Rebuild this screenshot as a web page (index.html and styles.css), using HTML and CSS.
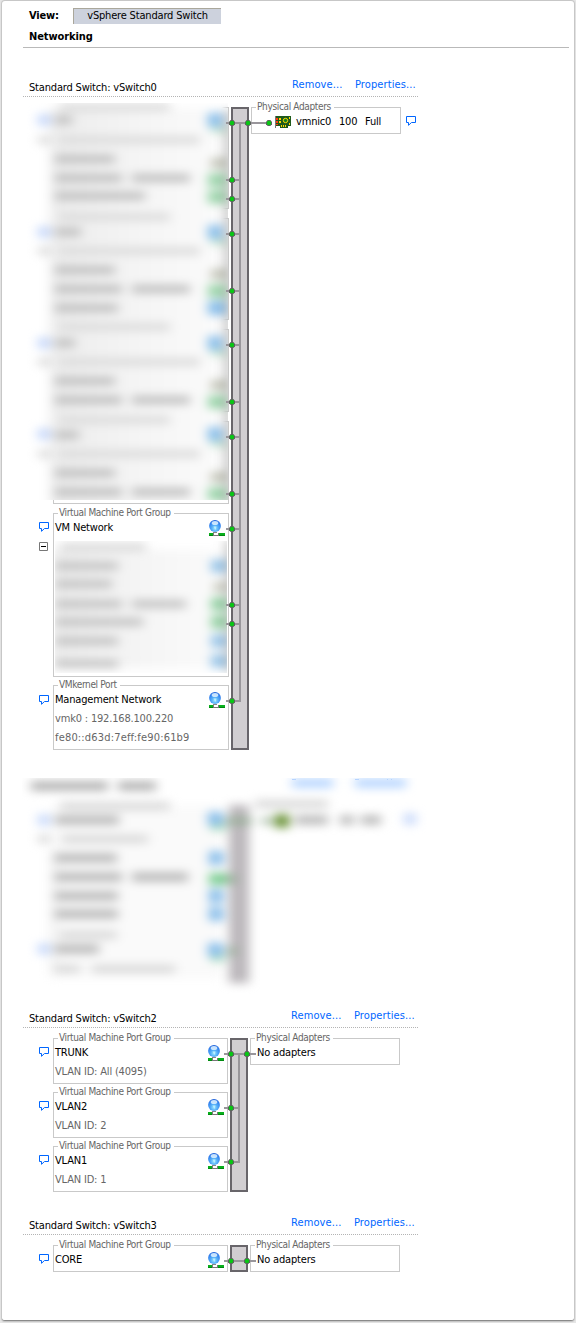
FILE: index.html
```html
<!DOCTYPE html>
<html lang="en">
<head>
<meta charset="utf-8">
<title>Networking</title>
<link rel="stylesheet" href="styles.css">
</head>
<body>
<svg class="defs" width="0" height="0">
  <defs>
    <radialGradient id="ball" cx="50%" cy="70%" r="70%">
      <stop offset="0" stop-color="#9fe8ff"/><stop offset=".4" stop-color="#55aef8"/><stop offset=".8" stop-color="#2f7fee"/><stop offset="1" stop-color="#1a5cd6"/>
    </radialGradient>
    <filter id="soft" x="-20%" y="-20%" width="140%" height="140%" color-interpolation-filters="sRGB"><feGaussianBlur stdDeviation="5.500 5"/></filter>
    <linearGradient id="haze"><stop offset="0" stop-color="#ececec"/><stop offset=".55" stop-color="#f5f5f5"/><stop offset="1" stop-color="#fbfbfb"/></linearGradient>
    <symbol id="globe" viewBox="0 0 16 16">
      <circle cx="6" cy="6" r="5.900" fill="url(#ball)"/>
      <ellipse cx="6" cy="2.900" rx="3.300" ry="2" fill="#e2f3ff" opacity=".85"/>
      <path d="M4.500 6.500H7.500L6.500 10Z" fill="#c8f4ff" opacity=".8"/>
      <path d="M4 12H8V13H4Z" fill="#888"/>
      <path d="M0 13H16V16H0Z" fill="#008a10"/><path d="M0 13H16V15H0Z" fill="#08b01c"/>
      <path d="M4 13H10V16H4Z" fill="#777"/><path d="M5 13H9V15H5Z" fill="#fff"/>
    </symbol>
    <symbol id="note" viewBox="0 0 10 10">
      <path d="M.5.5H9.500V6.500H5.500L2.500 9.300V6.500H.5Z" fill="#fff" stroke="#0066ff"/>
    </symbol>
    <symbol id="dot" viewBox="-3 -3 6 6" overflow="visible">
      <path d="M-1.300-3H1.300L3-1.300V1.300L1.300 3H-1.300L-3 1.300V-1.300Z" fill="#606060"/>
      <circle r="2.200" fill="#08c814"/>
    </symbol>
  </defs>
</svg>
<main class="page">
  <div class="toolbar"><span class="view">View:</span><span class="mode">vSphere Standard Switch</span></div>
  <h1 class="heading">Networking</h1>

  <section class="switch first">
    <header class="head"><span class="title">Standard Switch: vSwitch0</span><a class="remove">Remove...</a><a class="props">Properties...</a></header>
    <div class="body wide">
      <div class="ports">
        <div class="port"><div class="box h102"></div></div>
        <div class="port"><div class="box h102"></div></div>
        <div class="port"><div class="box h83"></div></div>
        <div class="port"><div class="box h83"></div></div>
        <div class="port">
          <div class="side"><svg class="note"><use href="#note"/></svg>
            <svg class="fold" viewBox="0 0 9 9"><path d="M.5.5H8.500V8.500H.5Z" fill="#fff" stroke="#777"/><path d="M2 4.500H7" stroke="#000"/></svg></div>
          <div class="box h163"><span class="legend">Virtual Machine Port Group</span><div class="name">VM Network<svg class="globe"><use href="#globe"/></svg></div></div>
        </div>
        <div class="port">
          <div class="side"><svg class="note"><use href="#note"/></svg></div>
          <div class="box h65"><span class="legend">VMkernel Port</span><div class="name">Management Network<svg class="globe"><use href="#globe"/></svg></div>
            <div class="info">vmk0 : 192.168.100.220</div><div class="info ip6">fe80::d63d:7eff:fe90:61b9</div></div>
        </div>
        <svg class="redact upper" viewBox="22 103 206 397">
          <defs><linearGradient id="edge"><stop offset="0" stop-color="#fff"/><stop offset=".97" stop-color="#fff"/><stop offset="1" stop-color="#fff" stop-opacity=".15"/></linearGradient></defs>
          <path d="M22 103H228V500H22Z" fill="url(#edge)"/>
          <g filter="url(#soft)" fill="none">
            <path d="M50 108H222V520H50Z" fill="url(#haze)"/>
            <path d="M60 107H170M38 140H50M60 140H200M60 217H170M38 251H50M60 251H200M60 327H170M38 362H50M60 362H200M60 420H170M38 454H50M60 454H200" stroke="#dcdcdc" stroke-width="8"/>
            <path d="M55 120H72M55 159H115M55 178H122M132 178H190M55 196H145M55 232H81M55 270H115M55 289H122M132 289H190M55 308H118M55 343H75M55 381H115M55 400H122M132 400H190M55 435H79M55 473H115M55 492H122M132 492H190" stroke="#bebebe" stroke-width="8"/>
            <path d="M38 120H50M38 232H50M38 343H50M38 434H50" stroke="#c4d6fb" stroke-width="11"/>
            <path d="M208 120H222M208 232H222M208 308H225M208 343H222M208 434H222" stroke="#86bdea" stroke-width="14"/>
            <path d="M211 130H226M211 242H226M211 353H226M211 444H226" stroke="#c4e4cf" stroke-width="6"/>
            <path d="M208 180H226M208 197H226M208 291H226M208 402H226M208 494H226" stroke="#98d3a8" stroke-width="13"/>
            <path d="M211 163H226M211 274H226M211 385H226M211 477H226" stroke="#c0c2b4" stroke-width="10"/>
            <path d="M228 110V515" stroke="#a2a2a2" stroke-width="5"/>
          </g>
        </svg>
        <svg class="redact lower" viewBox="55 541 172 132">
          <path d="M55 541H227V673H55Z" fill="#fff"/>
          <g filter="url(#soft)" fill="none">
            <path d="M52 550H222V668H52Z" fill="url(#haze)"/>
            <path d="M60 547H146" stroke="#dadada" stroke-width="8"/>
            <path d="M55 566H118M55 584H112M55 604H122M132 604H186M55 622H143M55 641H118M55 664H118" stroke="#c2c2c2" stroke-width="8"/>
            <path d="M211 566H226M211 641H226M211 661H226" stroke="#96c4e8" stroke-width="13"/>
            <path d="M211 604H227M211 622H227" stroke="#90cfa0" stroke-width="13"/>
            <path d="M214 587H226" stroke="#c0c2b4" stroke-width="9"/>
            <path d="M229 540V672" stroke="#a2a2a2" stroke-width="5"/>
          </g>
        </svg>
      </div>
      <svg class="bus" viewBox="231 107 18 643" width="18" height="643">
        <path d="M232 108H248V749H232Z" fill="#d1ced1" stroke="#68656a" stroke-width="2"/>
        <path d="M226 123H270M240 123V701M226 180H240M226 199H240M226 234H240M226 291H240M226 345H240M226 402H240M226 437H240M226 494H240M226 529H240M226 605H240M226 624H240M226 701H241" fill="none" stroke="#99969b" stroke-width="2"/>
        <use href="#dot" x="229" y="120" width="6" height="6"/><use href="#dot" x="245" y="120" width="6" height="6"/><use href="#dot" x="266" y="120" width="6" height="6"/>
        <use href="#dot" x="229" y="177" width="6" height="6"/><use href="#dot" x="229" y="196" width="6" height="6"/><use href="#dot" x="229" y="231" width="6" height="6"/>
        <use href="#dot" x="229" y="288" width="6" height="6"/><use href="#dot" x="229" y="342" width="6" height="6"/><use href="#dot" x="229" y="399" width="6" height="6"/>
        <use href="#dot" x="229" y="434" width="6" height="6"/><use href="#dot" x="229" y="491" width="6" height="6"/><use href="#dot" x="229" y="526" width="6" height="6"/>
        <use href="#dot" x="229" y="602" width="6" height="6"/><use href="#dot" x="229" y="621" width="6" height="6"/><use href="#dot" x="229" y="698" width="6" height="6"/>
      </svg>
      <div class="adapter"><span class="legend">Physical Adapters</span>
        <div class="nic"><svg class="card" viewBox="0 0 16 12"><path d="M1 0H16V10H13V12H5V10H1Z" fill="#1f5a1c"/><path d="M0 0H1V12H0Z" fill="#777"/><path d="M1 2H3V4H1ZM1 5H3V7H1ZM1 8H3V9H1Z" fill="#ff3a10"/><path d="M4 2H6V4H4ZM4 5H6V7H4ZM6 9H7V11H6ZM8 9H9V11H8ZM10 9H11V11H10ZM14 1H15V3H14ZM14 7H15V9H14Z" fill="#ffd800"/><circle cx="10.500" cy="4.500" r="2.200" fill="#108020" stroke="#ffd800"/></svg><span class="nicname">vmnic0</span><span class="speed">100</span><span class="duplex">Full</span></div>
      </div>
      <svg class="note tail"><use href="#note"/></svg>
    </div>
  </section>

  <svg class="hidden-switch" viewBox="22 750 420 258">
    <path d="M292 779.500H296M355 779.500H359M387 779.500H388M391 779.500H392" stroke="#b8d4ff"/>
    <svg x="22" y="778" width="420" height="230" viewBox="22 778 420 230">
      <g filter="url(#soft)" fill="none">
        <path d="M50 806H222V978H50Z" fill="#fafafa"/>
        <path d="M54 850V975" stroke="#ececec" stroke-width="5"/>
        <path d="M31 786H108M118 786H156" stroke="#b0b0b0" stroke-width="9"/>
        <path d="M60 806H170M38 839H50M62 839H148M60 935H117M55 969H80M92 969H175M255 804H328" stroke="#d8d8d8" stroke-width="8"/>
        <path d="M55 820H119M55 858H117M55 877H122M132 877H188M55 896H118M55 914H118M55 949H99M295 820H328M340 820H354M361 820H381" stroke="#b8b8b8" stroke-width="9"/>
        <path d="M292 783H333M355 783H406" stroke="#b4d4ff" stroke-width="9"/>
        <path d="M38 820H50M38 949H50M404 819H416" stroke="#c6d8fb" stroke-width="11"/>
        <path d="M208 819H223M209 858H223M209 896H223M209 914H223M208 950H223" stroke="#86bdea" stroke-width="14"/>
        <path d="M211 828H226M211 959H225" stroke="#a8dcb8" stroke-width="5"/>
        <path d="M209 879H227" stroke="#72cb8c" stroke-width="11"/>
        <path d="M239 805V983" stroke="#bbb7bb" stroke-width="20"/>
        <path d="M225 821H252M226 879H237M226 951H237M262 821H272" stroke="#92ab92" stroke-width="6"/>
        <path d="M275 821H289" stroke="#5f8a28" stroke-width="13"/>
      </g>
    </svg>
  </svg>

  <section class="switch narrow">
    <header class="head"><span class="title">Standard Switch: vSwitch2</span><a class="remove">Remove...</a><a class="props">Properties...</a></header>
    <div class="body">
      <div class="ports">
        <div class="port"><div class="side"><svg class="note"><use href="#note"/></svg></div><div class="box h46"><span class="legend">Virtual Machine Port Group</span><div class="name">TRUNK<svg class="globe"><use href="#globe"/></svg></div><div class="info">VLAN ID: All (4095)</div></div></div>
        <div class="port"><div class="side"><svg class="note"><use href="#note"/></svg></div><div class="box h46"><span class="legend">Virtual Machine Port Group</span><div class="name">VLAN2<svg class="globe"><use href="#globe"/></svg></div><div class="info">VLAN ID: 2</div></div></div>
        <div class="port"><div class="side"><svg class="note"><use href="#note"/></svg></div><div class="box h46"><span class="legend">Virtual Machine Port Group</span><div class="name">VLAN1<svg class="globe"><use href="#globe"/></svg></div><div class="info">VLAN ID: 1</div></div></div>
      </div>
      <svg class="bus" viewBox="230 1038 18 154" width="18" height="154">
        <path d="M231 1039H247V1191H231Z" fill="#d1ced1" stroke="#68656a" stroke-width="2"/>
        <path d="M224 1054H256M239 1054V1162M224 1108H239M224 1162H240" fill="none" stroke="#99969b" stroke-width="2"/>
        <use href="#dot" x="228" y="1051" width="6" height="6"/><use href="#dot" x="244" y="1051" width="6" height="6"/><use href="#dot" x="228" y="1105" width="6" height="6"/><use href="#dot" x="228" y="1159" width="6" height="6"/>
      </svg>
      <div class="adapter"><span class="legend">Physical Adapters</span><div class="none">No adapters</div></div>
    </div>
  </section>

  <section class="switch narrow last">
    <header class="head"><span class="title">Standard Switch: vSwitch3</span><a class="remove">Remove...</a><a class="props">Properties...</a></header>
    <div class="body">
      <div class="ports">
        <div class="port"><div class="side"><svg class="note"><use href="#note"/></svg></div><div class="box h27"><span class="legend">Virtual Machine Port Group</span><div class="name">CORE<svg class="globe"><use href="#globe"/></svg></div></div></div>
      </div>
      <svg class="bus" viewBox="230 1245 18 27" width="18" height="27">
        <path d="M231 1246H247V1271H231Z" fill="#d1ced1" stroke="#68656a" stroke-width="2"/>
        <path d="M224 1261H256" stroke="#99969b" stroke-width="2"/>
        <use href="#dot" x="228" y="1258" width="6" height="6"/><use href="#dot" x="244" y="1258" width="6" height="6"/>
      </svg>
      <div class="adapter"><span class="legend">Physical Adapters</span><div class="none">No adapters</div></div>
    </div>
  </section>
</main>
</body>
</html>
```
FILE: styles.css
```css
* { box-sizing: border-box; }
body {
  margin: 0;
  padding: 1px 2px 3px 2px;
  height: 1323px;
  overflow: hidden;
  background: #e6e6e6;
  color: #000;
  font: 11px/19px "DejaVu Sans Condensed", "DejaVu Sans", sans-serif;
  letter-spacing: -0.18px;
  white-space: nowrap;
}
svg { display: block; }
.defs { position: absolute; }
.page {
  height: 1320px;
  padding: 7px 5px 0 20px;
  background: #fff;
  border-bottom: 1px solid #8a8a8a;
  border-radius: 3px;
  box-shadow: 0 0 1px 1px #c4c4c4;
}
.toolbar { display: flex; height: 16px; line-height: 16px; }
.view { width: 51px; padding-left: 7px; font-weight: bold; }
.mode {
  width: 148px;
  background: #cdd2dd;
  border-top: 1px solid #aaa79b;
  border-left: 1px solid #aaa79b;
  line-height: 13px;
  text-align: center;
}
.heading {
  height: 24px;
  margin: 0 0 29px 1px;
  padding: 3px 0 0 6px;
  border-bottom: 1px solid #b9b9b9;
  font-size: 11px;
  line-height: 19px;
  letter-spacing: -0.1px;
}
.head {
  display: flex;
  width: 395px;
  height: 20px;
  margin-left: 1px;
  padding: 1px 0 0 6px;
  border-bottom: 1px dotted #b4b4b4;
}
.title { width: 263px; }
.head a { margin-top: -3px; color: #0066ff; letter-spacing: 0.1px; }
.remove { width: 63px; }
.narrow .title { width: 262px; }
.body { display: flex; padding: 10px 0 0 16px; }
.ports { display: flex; flex-direction: column; gap: 8px; width: 190px; margin-right: 2px; }
.wide .ports { position: relative; gap: 9px; width: 191px; }
.port { display: flex; justify-content: flex-end; }
.side { width: 15px; padding: 9px 0 0 1px; }
.note { width: 10px; height: 10px; }
.fold { width: 9px; height: 9px; margin-top: 10px; }
.box { width: 175px; border: 1px solid #c9c9c9; }
.wide .box { width: 176px; }
.h102 { height: 102px; }
.h83 { height: 83px; }
.h163 { height: 164px; }
.h65 { height: 65px; margin-top: -1px; }
.h46 { height: 46px; }
.h27 { height: 27px; }
.legend {
  display: block;
  width: fit-content;
  height: 12px;
  margin: -7px 0 -1px 4px;
  padding: 0 3px 0 1px;
  background: #fff;
  color: #666;
  font-size: 10px;
  line-height: 12px;
  letter-spacing: -0.35px;
}
.name, .info { display: flex; justify-content: space-between; height: 19px; padding: 0 3px 0 1px; }
.info { color: #666; }
.ip6 { letter-spacing: 0.17px; }
.globe { width: 16px; height: 16px; margin-top: 2px; }
.redact { position: absolute; overflow: hidden; }
.upper { left: -16px; top: -4px; width: 206px; height: 397px; }
.lower { left: 17px; top: 434px; width: 172px; height: 132px; }
.bus { position: relative; flex: none; overflow: visible; }
.adapter { width: 150px; height: 27px; margin-left: 2px; border: 1px solid #c9c9c9; }
.none { padding-left: 6px; }
.nic { display: flex; padding-left: 23px; }
.card { width: 16px; height: 12px; margin: 4px 5px 0 0; }
.nicname { width: 43px; }
.speed { width: 26px; }
.tail { margin: 9px 0 0 5px; }
.hidden-switch { width: 420px; height: 258px; }
.last { margin-top: 23px; }
```
